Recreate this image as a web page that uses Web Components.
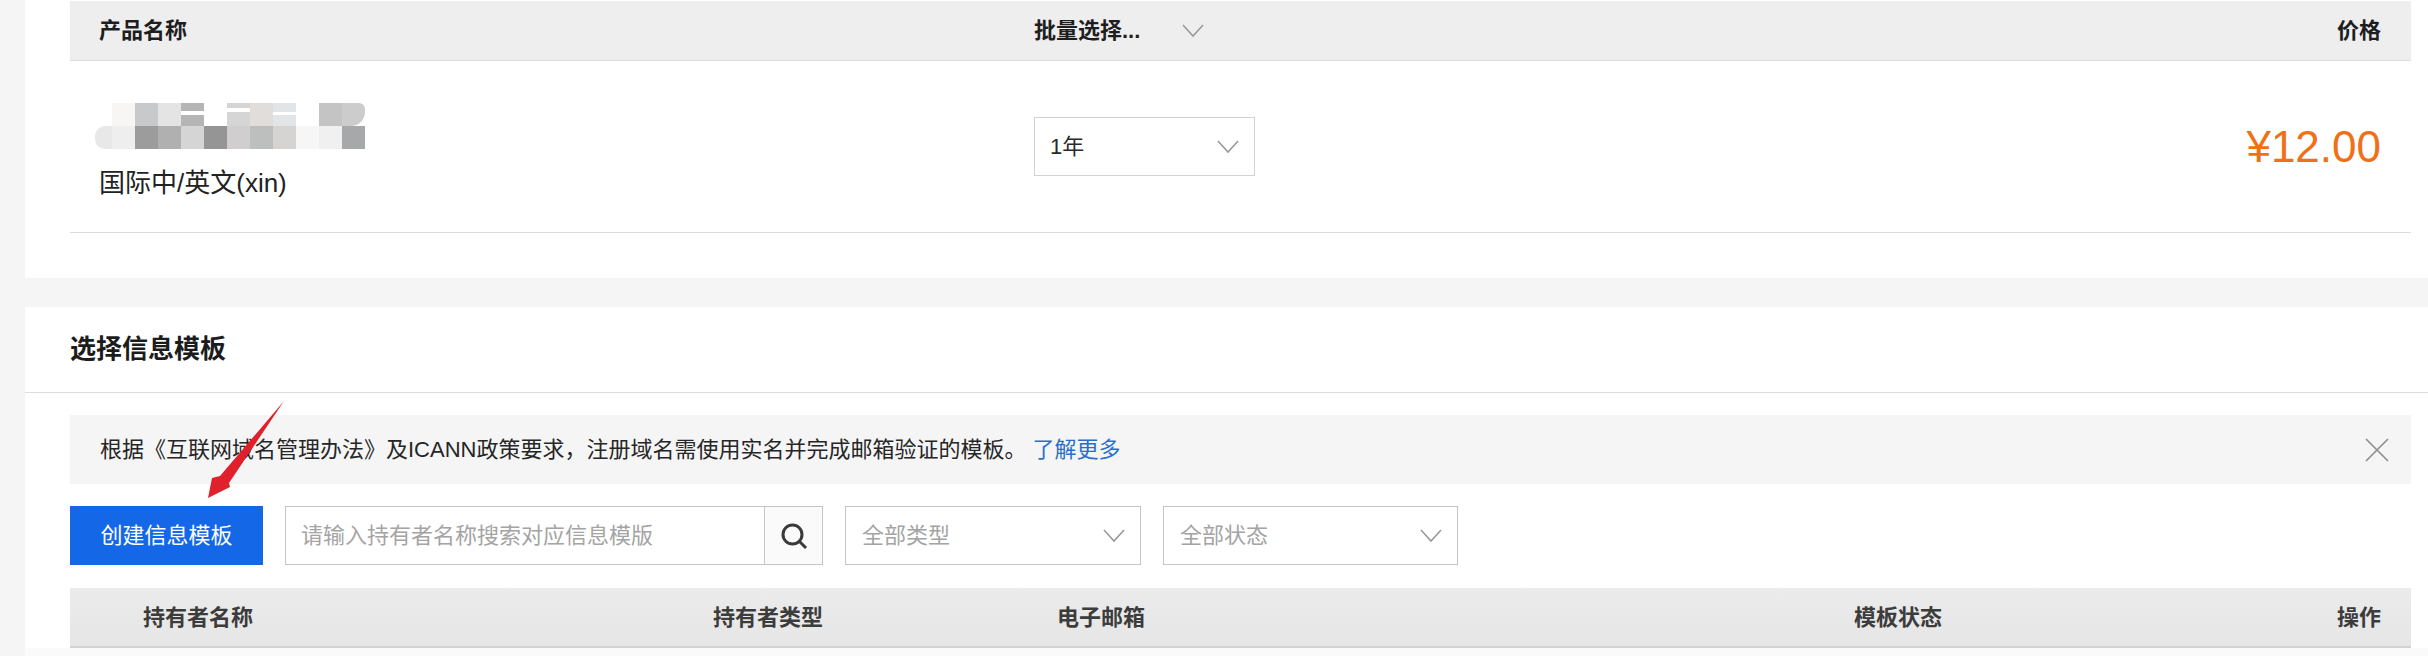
<!DOCTYPE html>
<html lang="zh-CN">
<head>
<meta charset="utf-8">
<title>选择信息模板</title>
<style>
    html, body { margin: 0; height: 656px; overflow: hidden; background: #f5f5f5; }
    body {
        font-family: "Liberation Sans", "Noto Sans CJK SC", sans-serif;
        font-size: 22px;
        color: #222;
    }
</style>
</head>
<body>
<order-page>
    <section-card class="first">
        <table-head columns="935px 1fr auto" pad-left="29" tone="light">
            <span>产品名称</span>
            <span><head-select>批量选择...</head-select></span>
            <span>价格</span>
        </table-head>
        <product-row>
            <blur-block slot="name"></blur-block>
            <span slot="type">国际中/英文(xin)</span>
            <select-box slot="period" value="1年" w="221" filled></select-box>
            <span slot="price">¥12.00</span>
        </product-row>
    </section-card>

    <section-card title="选择信息模板">
        <notice-bar>
            根据《互联网域名管理办法》及ICANN政策要求，注册域名需使用实名并完成邮箱验证的模板。<a slot="link">了解更多</a>
        </notice-bar>
        <tool-bar>
            <primary-button>创建信息模板</primary-button>
            <search-box placeholder="请输入持有者名称搜索对应信息模版"></search-box>
            <select-box value="全部类型" w="296"></select-box>
            <select-box value="全部状态" w="295"></select-box>
        </tool-bar>
        <table-head columns="570px 344px 797px 1fr auto" pad-left="73" tone="dark">
            <span>持有者名称</span>
            <span>持有者类型</span>
            <span>电子邮箱</span>
            <span>模板状态</span>
            <span>操作</span>
        </table-head>
        <red-arrow></red-arrow>
    </section-card>
</order-page>

<script>
const CHEVRON = `<svg width="22" height="14" viewBox="0 0 22 14" fill="none" stroke="#999" stroke-width="1.6"><path d="M1 1l10 11L21 1"/></svg>`;

class OrderPage extends HTMLElement {
    constructor() {
        super();
        this.attachShadow({ mode: 'open' });
        this.shadowRoot.innerHTML = `
            <style>
                :host { display: flex; flex-direction: column; gap: 29px; padding-left: 25px; }
            </style>
            <slot></slot>
        `;
    }
}

class SectionCard extends HTMLElement {
    constructor() {
        super();
        this.attachShadow({ mode: 'open' });
        const title = this.getAttribute('title');
        // первая карточка без заголовка, таблица идёт сразу сверху
        this.shadowRoot.innerHTML = `
            <style>
                :host { display: block; position: relative; background: #fff; }
                :host(.first) { height: 278px; padding-top: 1px; box-sizing: border-box; }
                .title {
                    height: 86px;
                    box-sizing: border-box;
                    padding-left: 45px;
                    border-bottom: 1px solid #ddd;
                    font-size: 26px;
                    font-weight: 700;
                    line-height: 84px;
                    color: #1c1c1c;
                }
                .body { padding: 0 17px 0 45px; }
                :host(:not(.first)) .body { padding-top: 22px; height: 264px; box-sizing: border-box; background: linear-gradient(#fff 0 255px, #fafafa 255px); }
            </style>
            ${title ? `<div class="title">${title}</div>` : ''}
            <div class="body"><slot></slot></div>
        `;
        this.removeAttribute('title');
    }
}

class TableHead extends HTMLElement {
    constructor() {
        super();
        this.attachShadow({ mode: 'open' });
        const dark = this.getAttribute('tone') === 'dark';
        this.shadowRoot.innerHTML = `
            <style>
                :host {
                    display: grid;
                    grid-template-columns: ${this.getAttribute('columns')};
                    align-items: center;
                    box-sizing: border-box;
                    height: 60px;
                    padding: ${dark ? 2 : 0}px 30px 0 ${this.getAttribute('pad-left')}px;
                    font-size: 22px;
                    line-height: 30px;
                    font-weight: 700;
                    color: ${dark ? '#3c3c3c' : '#1e1e1e'};
                    background: ${dark ? 'linear-gradient(#ebebeb, #e6e6e6)' : '#eeeeee'};
                    border-bottom: ${dark ? '2px solid #d2d2d2' : '1px solid #dcdcdc'};
                }
            </style>
            <slot></slot>
        `;
    }
}

class HeadSelect extends HTMLElement {
    constructor() {
        super();
        this.attachShadow({ mode: 'open' });
        this.shadowRoot.innerHTML = `
            <style>
                :host { display: inline-flex; align-items: center; width: 170px; justify-content: space-between; }
                svg { display: block; }
            </style>
            <slot></slot>${CHEVRON}
        `;
    }
}

class BlurBlock extends HTMLElement {
    constructor() {
        super();
        this.attachShadow({ mode: 'open' });
        // замазанное имя домена, две строки квадратиков
        const stripe = (c, a, b) => `linear-gradient(${c} 0 ${a}px, #fff ${a}px ${b}px, ${c} ${b}px)`;
        const top = ['transparent', '#f8f5f5', '#c8c9cb', '#e4e4e4', stripe('#b5b5b5', 8, 12), 'transparent', stripe('#d5d5d5', 5, 9), '#e0dddb', stripe('#e2e5e8', 9, 12), 'transparent', '#c4c4c4', '#cccccc'];
        const bottom = ['#e8e8e8', '#eeeeee', '#9c9c9c', '#b0b0b0', '#d5d5d5', '#959595', '#d0cece', '#bdbebe', '#d5d4d2', '#f6f6f6', '#f0f0f0', '#a6a8aa'];
        this.shadowRoot.innerHTML = `
            <style>
                :host {
                    display: grid;
                    grid-template-columns: 17px repeat(11, 23px);
                    grid-auto-rows: 23px;
                    width: 270px;
                    margin-left: -4px;
                }
                i { display: block; }
                .corner { border-radius: 0 6px 14px 0; }
                .rounded { border-radius: 10px 0 0 10px; }
            </style>
            ${top.map((c, i) => `<i class="${i === 11 ? 'corner' : ''}" style="background:${c}"></i>`).join('')}
            ${bottom.map((c, i) => `<i class="${i === 0 ? 'rounded' : ''}" style="background:${c}"></i>`).join('')}
        `;
    }
}

class ProductRow extends HTMLElement {
    constructor() {
        super();
        this.attachShadow({ mode: 'open' });
        this.shadowRoot.innerHTML = `
            <style>
                :host {
                    display: grid;
                    grid-template-columns: 935px 1fr auto;
                    align-items: center;
                    box-sizing: border-box;
                    height: 172px;
                    padding: 0 30px 0 29px;
                    border-bottom: 1px solid #dcdcdc;
                }
                .name {
                    align-self: start;
                    padding-top: 42px;
                    display: flex;
                    flex-direction: column;
                    gap: 19px;
                    font-size: 26px;
                    line-height: 30px;
                    color: #222;
                }
                .price { font-size: 44px; line-height: 50px; color: #f07016; }
                .period { display: block; }
            </style>
            <div class="name"><slot name="name"></slot><slot name="type"></slot></div>
            <div class="period"><slot name="period"></slot></div>
            <div class="price"><slot name="price"></slot></div>
        `;
    }
}

class SelectBox extends HTMLElement {
    constructor() {
        super();
        this.attachShadow({ mode: 'open' });
        const filled = this.hasAttribute('filled');
        this.shadowRoot.innerHTML = `
            <style>
                :host {
                    display: flex;
                    align-items: center;
                    justify-content: space-between;
                    box-sizing: border-box;
                    width: ${this.getAttribute('w')}px;
                    height: 59px;
                    padding: 0 15px 0 ${filled ? 15 : 16}px;
                    border: 1px solid ${filled ? '#d2d2d2' : '#c4c4c4'};
                    background: #fff;
                    color: ${filled ? '#2a2a2a' : '#a4a4a4'};
                    font-size: 22px;
                    line-height: 26px;
                }
                svg { display: block; }
            </style>
            <span>${this.getAttribute('value')}</span>${CHEVRON}
        `;
    }
}

class NoticeBar extends HTMLElement {
    constructor() {
        super();
        this.attachShadow({ mode: 'open' });
        this.shadowRoot.innerHTML = `
            <style>
                :host {
                    display: flex;
                    align-items: center;
                    justify-content: space-between;
                    box-sizing: border-box;
                    height: 69px;
                    padding: 0 22px 0 30px;
                    background: #f5f5f5;
                    color: #262626;
                    font-size: 22px;
                    line-height: 26px;
                }
                ::slotted(a) { color: #2a6fc9; }
                svg { display: block; }
            </style>
            <div><slot></slot><slot name="link"></slot></div>
            <svg width="24" height="24" viewBox="0 0 24 24" fill="none" stroke="#8f8f8f" stroke-width="1.7"><path d="M1 1l22 22M23 1L1 23"/></svg>
        `;
    }
}

class ToolBar extends HTMLElement {
    constructor() {
        super();
        this.attachShadow({ mode: 'open' });
        this.shadowRoot.innerHTML = `
            <style>
                :host { display: flex; align-items: flex-start; gap: 22px; margin: 22px 0 23px; height: 59px; }
            </style>
            <slot></slot>
        `;
    }
}

class PrimaryButton extends HTMLElement {
    constructor() {
        super();
        this.attachShadow({ mode: 'open' });
        this.shadowRoot.innerHTML = `
            <style>
                :host {
                    display: flex;
                    align-items: center;
                    justify-content: center;
                    width: 193px;
                    height: 59px;
                    background: #1467e6;
                    color: #fff;
                    font-size: 22px;
                    line-height: 26px;
                }
            </style>
            <slot></slot>
        `;
    }
}

class SearchBox extends HTMLElement {
    constructor() {
        super();
        this.attachShadow({ mode: 'open' });
        this.shadowRoot.innerHTML = `
            <style>
                :host {
                    display: flex;
                    box-sizing: border-box;
                    width: 538px;
                    height: 59px;
                    border: 1px solid #c4c4c4;
                    color: #a4a4a4;
                    font-size: 22px;
                    line-height: 26px;
                }
                .text { flex: 1; display: flex; align-items: center; padding-left: 15px; }
                .btn {
                    width: 57px;
                    display: flex;
                    align-items: center;
                    justify-content: center;
                    border-left: 1px solid #c8c8c8;
                    background: #fafafa;
                }
            </style>
            <div class="text">${this.getAttribute('placeholder')}</div>
            <div class="btn">
                <svg width="28" height="28" viewBox="0 0 28 28" fill="none" stroke="#3a3a3a" stroke-width="3"><circle cx="12.5" cy="12.5" r="9.5"/><path d="M19.5 19.5l6.5 6.5"/></svg>
            </div>
        `;
    }
}

class RedArrow extends HTMLElement {
    constructor() {
        super();
        this.attachShadow({ mode: 'open' });
        this.shadowRoot.innerHTML = `
            <style>
                :host { display: block; position: absolute; left: 183px; top: 94px; width: 80px; height: 100px; pointer-events: none; }
                svg { display: block; }
            </style>
            <svg width="80" height="100" viewBox="0 0 80 100"><path d="M76 0L12 75L4 77L0 97L22 86L21 82Z" fill="#e0202a"/></svg>
        `;
    }
}

customElements.define('order-page', OrderPage);
customElements.define('section-card', SectionCard);
customElements.define('table-head', TableHead);
customElements.define('head-select', HeadSelect);
customElements.define('blur-block', BlurBlock);
customElements.define('product-row', ProductRow);
customElements.define('select-box', SelectBox);
customElements.define('notice-bar', NoticeBar);
customElements.define('tool-bar', ToolBar);
customElements.define('primary-button', PrimaryButton);
customElements.define('search-box', SearchBox);
customElements.define('red-arrow', RedArrow);
</script>
</body>
</html>
